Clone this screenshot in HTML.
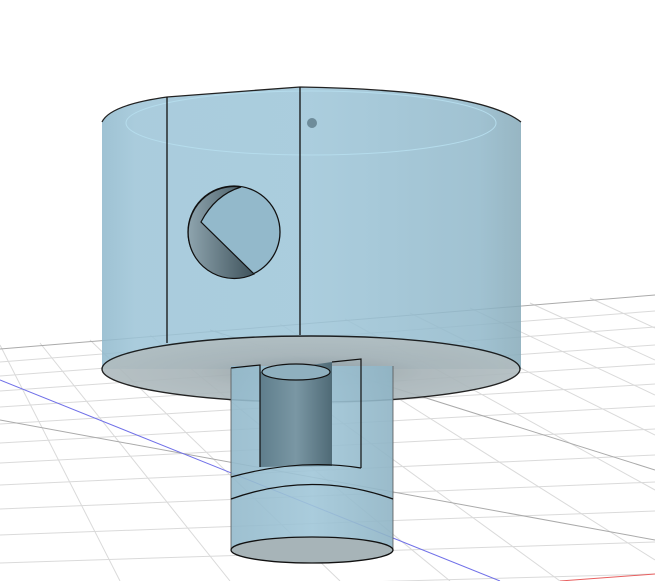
<!DOCTYPE html>
<html><head><style>html,body{margin:0;padding:0;background:#fff;overflow:hidden}svg{display:block}</style></head>
<body>
<svg width="655" height="581" viewBox="0 0 655 581" xmlns="http://www.w3.org/2000/svg">
<defs>
<linearGradient id="cyl" x1="0" x2="1">
<stop offset="0" stop-color="#8fb8cc"/><stop offset="0.08" stop-color="#9cc4d7"/><stop offset="0.5" stop-color="#9dc5d8"/><stop offset="0.9" stop-color="#91b8ca"/><stop offset="1" stop-color="#86aab9"/>
</linearGradient>
<linearGradient id="small" x1="0" x2="1">
<stop offset="0" stop-color="#93b9cb"/><stop offset="0.5" stop-color="#a0c6d8"/><stop offset="1" stop-color="#8fb4c5"/>
</linearGradient>
<radialGradient id="disk" cx="0.5" cy="0.55" r="0.6">
<stop offset="0" stop-color="#8e9aa0"/><stop offset="0.45" stop-color="#a9b5b9"/><stop offset="1" stop-color="#b3bfc2"/>
</radialGradient>
<linearGradient id="inner" x1="0" x2="1">
<stop offset="0" stop-color="#5f7e8c"/><stop offset="0.5" stop-color="#7a97a4"/><stop offset="1" stop-color="#4f6a76"/>
</linearGradient>
<linearGradient id="cres" x1="0" x2="1">
<stop offset="0" stop-color="#8ea4ae"/><stop offset="1" stop-color="#3f535c"/>
</linearGradient>
</defs>
<g stroke="#dadada" stroke-width="1" fill="none">
<line x1="0" y1="362" x2="655" y2="311"/>
<line x1="0" y1="376" x2="655" y2="327"/>
<line x1="0" y1="391" x2="655" y2="345"/>
<line x1="0" y1="407" x2="655" y2="364"/>
<line x1="0" y1="424" x2="655" y2="384"/>
<line x1="0" y1="443" x2="655" y2="406"/>
<line x1="0" y1="463" x2="655" y2="429"/>
<line x1="0" y1="485" x2="655" y2="455"/>
<line x1="0" y1="509" x2="655" y2="482"/>
<line x1="0" y1="535" x2="655" y2="511"/>
<line x1="0" y1="563" x2="655" y2="542"/>
<line x1="0" y1="592" x2="655" y2="574"/>
<line x1="0" y1="345" x2="120" y2="581"/>
<line x1="40" y1="343" x2="230" y2="581"/>
<line x1="90" y1="340" x2="340" y2="581"/>
<line x1="150" y1="335" x2="450" y2="581"/>
<line x1="215" y1="330" x2="560" y2="581"/>
<line x1="280" y1="324" x2="655" y2="560"/>
<line x1="345" y1="319" x2="655" y2="490"/>
<line x1="410" y1="313" x2="655" y2="435"/>
<line x1="470" y1="308" x2="655" y2="395"/>
<line x1="530" y1="303" x2="655" y2="360"/>
<line x1="590" y1="298" x2="655" y2="328"/>
</g>
<g stroke="#aaaaaa" stroke-width="1">
<line x1="0" y1="349" x2="655" y2="295"/>
<line x1="0" y1="420" x2="655" y2="540"/>
<line x1="210" y1="330" x2="655" y2="470"/>
</g>
<line x1="0" y1="380" x2="500" y2="581" stroke="#7070e8" stroke-width="1"/>
<line x1="560" y1="581" x2="655" y2="574" stroke="#e86060" stroke-width="1"/>

<!-- big cylinder body -->
<path d="M102,122 Q110,105 167,97 L300,87 Q480,90 521,122 L521,369 L102,369 Z" fill="url(#cyl)" opacity="0.86"/>
<ellipse cx="311" cy="123" rx="185" ry="32" fill="none" stroke="#b5dcec" stroke-width="1"/>
<circle cx="312" cy="123" r="5" fill="#5f7c89" opacity="0.8"/>
<path d="M102,122 Q110,105 167,97 L300,87 Q480,90 521,122" fill="none" stroke="#222" stroke-width="1.3"/>
<line x1="167" y1="97" x2="167" y2="343" stroke="#111" stroke-width="1.3"/>
<line x1="300" y1="87" x2="300" y2="335" stroke="#111" stroke-width="1.3"/>
<!-- hole -->
<circle cx="234" cy="232" r="46" fill="#93b9cb" stroke="#111" stroke-width="1.3"/>
<path d="M241,187 A46,46 0 1 0 254,274 L201,222 Q215,195 241,187 Z" fill="url(#cres)" stroke="#111" stroke-width="1.2"/>
<!-- bottom disk -->
<ellipse cx="311" cy="369" rx="209" ry="33" fill="url(#disk)" opacity="0.92" stroke="#111" stroke-width="1.4"/>
<!-- small cylinder -->
<rect x="231" y="366" width="162" height="184" fill="url(#small)" opacity="0.9"/>
<path d="M260,372 L260,467 L332,466 L332,362 Z" fill="url(#inner)"/>
<ellipse cx="296" cy="372" rx="34" ry="8" fill="#8fb0bf" stroke="#111" stroke-width="1.2"/>
<path d="M231,368 L260,365 L260,467 M332,362 L361,359 L361,468" fill="none" stroke="#111" stroke-width="1.2"/>
<line x1="231" y1="368" x2="231" y2="550" stroke="#555" stroke-width="0.8"/>
<line x1="393" y1="366" x2="393" y2="550" stroke="#555" stroke-width="0.8"/>
<path d="M231,477 Q300,458 361,468" fill="none" stroke="#111" stroke-width="1.2"/>
<path d="M231,499 Q312,470 393,499" fill="none" stroke="#111" stroke-width="1.3"/>
<ellipse cx="312" cy="550" rx="81" ry="13" fill="#a7b4b8" stroke="#111" stroke-width="1.3"/>
</svg>
</body></html>
